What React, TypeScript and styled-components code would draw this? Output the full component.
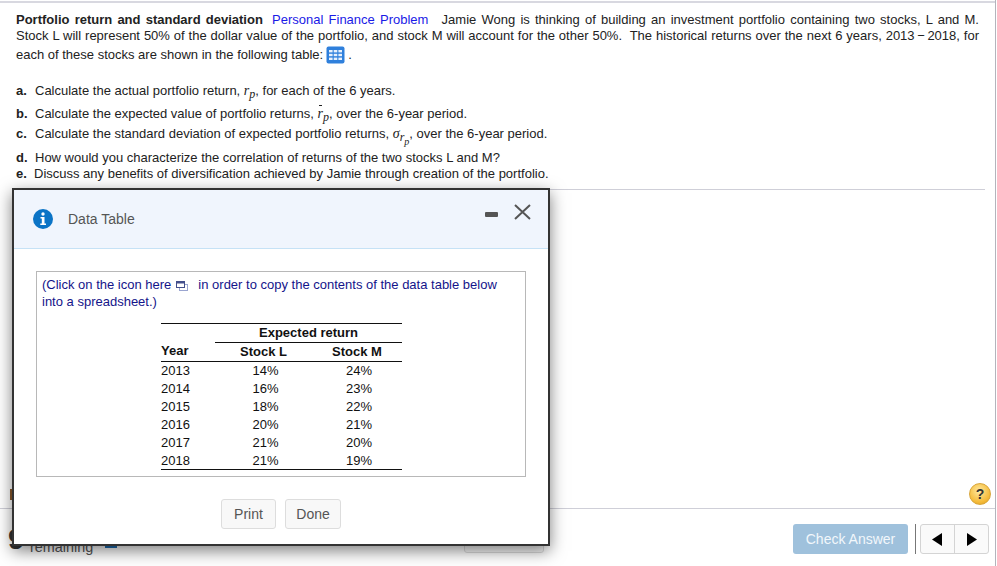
import React from "react";
import styled, { createGlobalStyle } from "styled-components";

const Global = createGlobalStyle`
  html, body { margin: 0; padding: 0; background: #fff; }
  body { font-family: "Liberation Sans", Arial, sans-serif; font-size: 13px; color: #222; }
  * { box-sizing: border-box; }
`;

const Page = styled.div`
  position: relative;
  width: 996px;
  height: 566px;
  overflow: hidden;
  display: flex;
  flex-direction: column;
  border-right: 1px solid #b4b4bc;
  background: #fff;
`;

const Question = styled.section`
  margin-top: 1px;
  border-top: 2px solid #d8d8e0;
  padding: 9px 16px 0 16px;
  display: flex;
  flex-direction: column;
`;

const Line = styled.div<{ $h: number; $mt?: number; $just?: boolean }>`
  height: ${(p) => p.$h}px;
  line-height: ${(p) => p.$h}px;
  margin-top: ${(p) => p.$mt ?? 0}px;
  white-space: ${(p) => (p.$just ? "normal" : "nowrap")};
  text-align: ${(p) => (p.$just ? "justify" : "left")};
  text-align-last: ${(p) => (p.$just ? "justify" : "left")};
  font-size: 13px;
  color: #222;
`;

const Title = styled.b`
  font-weight: 700;
`;

const Tag = styled.span`
  color: #1a1ae6;
  margin: 0 8px 0 4px;
`;

const Marker = styled.b<{ $w?: number }>`
  display: inline-block;
  width: ${(p) => p.$w ?? 19}px;
  font-weight: 700;
`;

const Mathvar = styled.i`
  position: relative;
  font-family: "Liberation Serif", "Times New Roman", serif;
  font-size: 14px;
`;

const Sub = styled.sub`
  font-family: "Liberation Serif", "Times New Roman", serif;
  font-style: italic;
  font-size: 12px;
  line-height: 0;
  vertical-align: -3px;
`;

const SubSub = styled.sub`
  font-size: 10px;
  line-height: 0;
  vertical-align: -4px;
`;

const Bar = styled.span`
  position: absolute;
  left: 1px;
  top: -1px;
  width: 3px;
  height: 1px;
  background: #222;
`;

const GridIcon = styled.svg`
  display: inline-block;
  vertical-align: -5px;
  margin: 0 3px 0 3px;
`;

const Divider = styled.hr`
  margin: 7px 0 0 0;
  border: 0;
  border-top: 1px solid #cfcfd8;
  width: 969px;
`;

const Spacer = styled.div`
  flex: 1;
  display: flex;
  align-items: flex-end;
  justify-content: space-between;
  padding: 0 3px 3px 10px;
`;

const CursorMark = styled.span`
  width: 2px;
  height: 11px;
  margin-bottom: 5px;
  background: #8a5a2c;
`;

const Help = styled.span`
  width: 22px;
  height: 22px;
  border-radius: 50%;
  display: flex;
  align-items: center;
  justify-content: center;
  background: radial-gradient(circle at 45% 35%, #ffe9a0, #f5bb3a 65%, #d99a1e);
  border: 1px solid #d9a63a;
  font-size: 14px;
  font-weight: 700;
  color: #333;
  margin-right: 1px;
`;

const Footer = styled.footer`
  height: 58px;
  border-top: 1px solid #cfcfd8;
  display: flex;
  align-items: flex-start;
  padding: 15px 6px 0 8px;
`;

const Count = styled.div`
  width: 22px;
  margin-top: 0;
  font-size: 30px;
  line-height: 30px;
  font-weight: 700;
  color: #333;
`;

const Remaining = styled.div`
  width: 75px;
  padding-top: 15px;
  font-size: 14.4px;
  line-height: 16px;
  color: #555;
`;

const ProgressStub = styled.span`
  width: 12px;
  height: 2px;
  margin-top: 22px;
  background: #1f6fb5;
`;

const GhostButton = styled.button`
  width: 80px;
  height: 29px;
  margin-left: 347px;
  border: 1px solid #ddd;
  border-radius: 3px;
  background: #fafafa;
`;

const CheckAnswer = styled.button`
  width: 115px;
  height: 30px;
  margin-left: 249px;
  border: 0;
  border-radius: 3px;
  background: #9fc1dc;
  color: #f2f7fb;
  font: 14px "Liberation Sans", Arial, sans-serif;
`;

const Separator = styled.span`
  width: 1px;
  height: 30px;
  margin: 0 4px 0 7px;
  background: #777;
`;

const NavGroup = styled.div`
  display: flex;
  width: 69px;
  height: 30px;
  border: 1px solid #d4d4d4;
  border-radius: 3px;
  background: #fafafa;
`;

const NavButton = styled.span<{ $line?: boolean }>`
  flex: 1;
  display: flex;
  align-items: center;
  justify-content: center;
  border-left: ${(p) => (p.$line ? "1px solid #d4d4d4" : "0")};
`;

const Edge = styled.span<{ $top: number }>`
  position: absolute;
  right: -1px;
  top: ${(p) => p.$top}px;
  width: 1px;
  height: 8px;
  background: #1f7ea3;
`;

const Modal = styled.div`
  position: absolute;
  left: 12px;
  top: 188px;
  width: 538px;
  height: 358px;
  border: 2px solid #333;
  background: #fff;
  box-shadow: 0 5px 15px rgba(0, 0, 0, 0.5);
  display: flex;
  flex-direction: column;
`;

const ModalHeader = styled.header`
  height: 59px;
  flex: none;
  display: flex;
  align-items: center;
  padding: 0 16px 0 19px;
  background: #f0f5fd;
  border-bottom: 1px solid #c6e2f6;
`;

const ModalTitle = styled.h2`
  flex: 1;
  margin: 0 0 0 15px;
  font-size: 14px;
  font-weight: 400;
  color: #555;
`;

const ModalBody = styled.div`
  flex: 1;
  display: flex;
  flex-direction: column;
  align-items: center;
  padding: 22px 22px 0 22px;
`;

const DataBox = styled.div`
  width: 490px;
  height: 206px;
  flex: none;
  border: 1px solid #b8b8b8;
  padding: 4px 7px 0 5px;
`;

const Note = styled.p`
  margin: 0;
  font-size: 13px;
  line-height: 17px;
  color: #14148a;
`;

const CopyIcon = styled.svg`
  display: inline-block;
  vertical-align: -2px;
  margin: 0 10px 0 5px;
`;

const Table = styled.table`
  border-collapse: collapse;
  width: 241px;
  margin: 13px 0 0 119px;
  table-layout: fixed;
  font-size: 13px;
  color: #111;
  border-top: 1px solid #111;
  border-bottom: 1px solid #111;
`;

const HeadCell = styled.th<{ $left?: boolean; $rule?: boolean }>`
  height: 19px;
  padding: 0 0 2px 0;
  font-weight: 700;
  text-align: ${(p) => (p.$left ? "left" : "center")};
  border-bottom: ${(p) => (p.$rule ? "1px solid #111" : "0")};
`;

const Cell = styled.td<{ $left?: boolean }>`
  height: 18px;
  padding: 0 0 0 ${(p) => (p.$left ? 0 : 4)}px;
  text-align: ${(p) => (p.$left ? "left" : "center")};
`;

const Actions = styled.div`
  display: flex;
  gap: 9px;
  margin-top: 22px;
`;

const ActionButton = styled.button<{ $w: number }>`
  width: ${(p) => p.$w}px;
  height: 30px;
  border: 1px solid #ddd;
  border-radius: 3px;
  background: #f8f8f8;
  color: #555;
  font: 14px "Liberation Sans", Arial, sans-serif;
`;

const rows = [
  ["2013", "14%", "24%"],
  ["2014", "16%", "23%"],
  ["2015", "18%", "22%"],
  ["2016", "20%", "21%"],
  ["2017", "21%", "20%"],
  ["2018", "21%", "19%"],
];

export default function App() {
  return (
    <>
      <Global />
      <Page>
        <Question>
          <Line $h={16} $just>
            <Title>Portfolio return and standard deviation</Title> <Tag>Personal Finance Problem</Tag> Jamie Wong is thinking of building an investment portfolio containing two stocks, L and M.
          </Line>
          <Line $h={16} $just>
            Stock L will represent 50% of the dollar value of the portfolio, and stock M will account for the other 50%.&nbsp; The historical returns over the next 6 years, 2013&thinsp;&minus;&thinsp;2018, for
          </Line>
          <Line $h={22}>
            each of these stocks are shown in the following table:
            <GridIcon width="19" height="18" viewBox="0 0 19 18">
              <rect x="0.5" y="0.5" width="18" height="17" rx="2" fill="#2f80dc" />
              <g fill="#e8f1fc">
                <rect x="3" y="4" width="3.6" height="2.4" />
                <rect x="7.7" y="4" width="3.6" height="2.4" />
                <rect x="12.4" y="4" width="3.6" height="2.4" />
                <rect x="3" y="7.8" width="3.6" height="2.4" />
                <rect x="7.7" y="7.8" width="3.6" height="2.4" />
                <rect x="12.4" y="7.8" width="3.6" height="2.4" />
                <rect x="3" y="11.6" width="3.6" height="2.4" />
                <rect x="7.7" y="11.6" width="3.6" height="2.4" />
                <rect x="12.4" y="11.6" width="3.6" height="2.4" />
              </g>
            </GridIcon>
            .
          </Line>
          <Line $h={20} $mt={15}>
            <Marker>a.</Marker>Calculate the actual portfolio return, <Mathvar>r<Sub>p</Sub></Mathvar>, for each of the 6 years.
          </Line>
          <Line $h={20} $mt={3}>
            <Marker>b.</Marker>Calculate the expected value of portfolio returns, <Mathvar><Bar />r<Sub>p</Sub></Mathvar>, over the 6-year period.
          </Line>
          <Line $h={20}>
            <Marker>c.</Marker>Calculate the standard deviation of expected portfolio returns, <Mathvar>σ<Sub>r<SubSub>p</SubSub></Sub></Mathvar>, over the 6-year period.
          </Line>
          <Line $h={17} $mt={5}>
            <Marker>d.</Marker>How would you characterize the correlation of returns of the two stocks L and M?
          </Line>
          <Line $h={16}>
            <Marker $w={18}>e.</Marker>Discuss any benefits of diversification achieved by Jamie through creation of the portfolio.
          </Line>
          <Divider />
        </Question>
        <Spacer>
          <CursorMark />
          <Help>?</Help>
        </Spacer>
        <Footer>
          <Count>9</Count>
          <Remaining>remaining</Remaining>
          <ProgressStub />
          <GhostButton aria-label="Clear" />
          <CheckAnswer>Check Answer</CheckAnswer>
          <Separator />
          <NavGroup>
            <NavButton>
              <svg width="11" height="13" viewBox="0 0 11 13"><path d="M10 0v13L0 6.5z" fill="#000" /></svg>
            </NavButton>
            <NavButton $line>
              <svg width="11" height="13" viewBox="0 0 11 13"><path d="M1 0v13l10-6.5z" fill="#000" /></svg>
            </NavButton>
          </NavGroup>
        </Footer>
        <Edge $top={272} />
        <Edge $top={302} />
        <Modal>
          <ModalHeader>
            <svg width="20" height="20" viewBox="0 0 20 20">
              <circle cx="10" cy="10" r="10" fill="#0b74c6" />
              <circle cx="10" cy="5" r="1.7" fill="#fff" />
              <path d="M7.5 8h4v6.6h1.5V16H7.3v-1.4h1.5V9.4H7.5z" fill="#fff" />
            </svg>
            <ModalTitle>Data Table</ModalTitle>
            <svg width="47" height="30" viewBox="0 0 47 30">
              <rect x="0" y="8" width="13" height="5" rx="1" fill="#555" />
              <path d="M30 1l15 14M45 1L30 15" stroke="#555" strokeWidth="2" fill="none" />
            </svg>
          </ModalHeader>
          <ModalBody>
            <DataBox>
              <Note>
                (Click on the icon here
                <CopyIcon width="12" height="11" viewBox="0 0 12 11">
                  <rect x="3.5" y="4.5" width="8" height="6" fill="#fff" stroke="#9aa5d0" />
                  <rect x="0.5" y="1.5" width="8" height="6" fill="#fff" stroke="#44508c" />
                  <rect x="0.5" y="1.5" width="8" height="2" fill="#44508c" />
                </CopyIcon>
                in order to copy the contents of the data table below
                <br />
                into a spreadsheet.)
              </Note>
              <Table>
                <colgroup>
                  <col style={{ width: 54 }} />
                  <col style={{ width: 97 }} />
                  <col style={{ width: 90 }} />
                </colgroup>
                <thead>
                  <tr>
                    <HeadCell />
                    <HeadCell colSpan={2} $rule>Expected return</HeadCell>
                  </tr>
                  <tr>
                    <HeadCell $left $rule>Year</HeadCell>
                    <HeadCell $rule>Stock L</HeadCell>
                    <HeadCell $rule>Stock M</HeadCell>
                  </tr>
                </thead>
                <tbody>
                  {rows.map((r) => (
                    <tr key={r[0]}>
                      <Cell $left>{r[0]}</Cell>
                      <Cell>{r[1]}</Cell>
                      <Cell>{r[2]}</Cell>
                    </tr>
                  ))}
                </tbody>
              </Table>
            </DataBox>
            <Actions>
              <ActionButton $w={55}>Print</ActionButton>
              <ActionButton $w={56}>Done</ActionButton>
            </Actions>
          </ModalBody>
        </Modal>
      </Page>
    </>
  );
}
